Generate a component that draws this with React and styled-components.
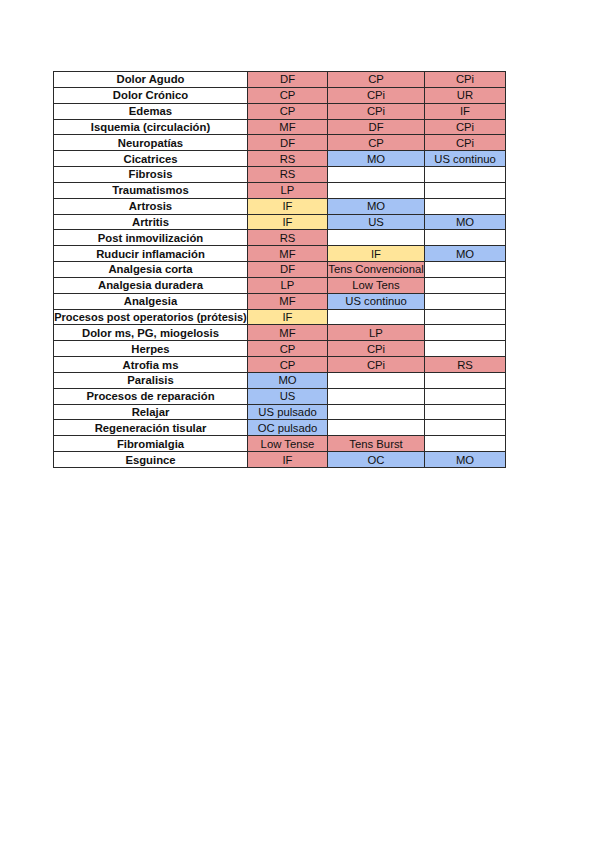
import React from "react";
import styled, { createGlobalStyle } from "styled-components";

const GlobalStyle = createGlobalStyle`
  html, body {
    margin: 0;
    background: #ffffff;
  }
  body {
    font-family: "Liberation Sans", Arial, sans-serif;
    color: #111;
  }
`;

const COLORS = {
  r: "#ea9999",
  b: "#a4c2f4",
  y: "#ffe599",
  w: "#ffffff",
};

const rows = [
  ["Dolor Agudo", ["DF", "r"], ["CP", "r"], ["CPi", "r"]],
  ["Dolor Crónico", ["CP", "r"], ["CPi", "r"], ["UR", "r"]],
  ["Edemas", ["CP", "r"], ["CPi", "r"], ["IF", "r"]],
  ["Isquemia (circulación)", ["MF", "r"], ["DF", "r"], ["CPi", "r"]],
  ["Neuropatías", ["DF", "r"], ["CP", "r"], ["CPi", "r"]],
  ["Cicatrices", ["RS", "r"], ["MO", "b"], ["US continuo", "b"]],
  ["Fibrosis", ["RS", "r"], null, null],
  ["Traumatismos", ["LP", "r"], null, null],
  ["Artrosis", ["IF", "y"], ["MO", "b"], null],
  ["Artritis", ["IF", "y"], ["US", "b"], ["MO", "b"]],
  ["Post inmovilización", ["RS", "r"], null, null],
  ["Ruducir inflamación", ["MF", "r"], ["IF", "y"], ["MO", "b"]],
  ["Analgesia corta", ["DF", "r"], ["Tens Convencional", "r"], null],
  ["Analgesia duradera", ["LP", "r"], ["Low Tens", "r"], null],
  ["Analgesia", ["MF", "r"], ["US continuo", "b"], null],
  ["Procesos post operatorios (prótesis)", ["IF", "y"], null, null],
  ["Dolor ms, PG, miogelosis", ["MF", "r"], ["LP", "r"], null],
  ["Herpes", ["CP", "r"], ["CPi", "r"], null],
  ["Atrofia ms", ["CP", "r"], ["CPi", "r"], ["RS", "r"]],
  ["Paralisis", ["MO", "b"], null, null],
  ["Procesos de reparación", ["US", "b"], null, null],
  ["Relajar", ["US pulsado", "b"], null, null],
  ["Regeneración tisular", ["OC pulsado", "b"], null, null],
  ["Fibromialgia", ["Low Tense", "r"], ["Tens Burst", "r"], null],
  ["Esguince", ["IF", "r"], ["OC", "b"], ["MO", "b"]],
];

const Page = styled.div`
  padding: 71px 0 0 53px;
`;

const Grid = styled.div`
  display: grid;
  grid-template-columns: 193px 79px 96px 80px;
  grid-template-rows: repeat(25, 1fr);
  gap: 1px;
  width: 453px;
  height: 397px;
  border: 1px solid #2a2a2a;
  box-sizing: border-box;
  background: #2a2a2a;
`;

const Label = styled.div`
  background: #fff;
  display: flex;
  align-items: center;
  justify-content: center;
  font-size: ${(p) => (p.$long ? "11px" : "11.3px")};
  font-weight: bold;
  white-space: nowrap;
`;

const Cell = styled.div`
  background: ${(p) => COLORS[p.$tone] || "#fff"};
  display: flex;
  align-items: center;
  justify-content: center;
  font-size: 11.3px;
  white-space: nowrap;
`;

export default function App() {
  return (
    <>
      <GlobalStyle />
      <Page>
        <Grid>
          {rows.map(([label, ...vals], i) => (
            <React.Fragment key={i}>
              <Label $long={label.length > 30}>{label}</Label>
              {vals.map((v, j) => (
                <Cell key={j} $tone={v ? v[1] : "w"}>
                  {v ? v[0] : ""}
                </Cell>
              ))}
            </React.Fragment>
          ))}
        </Grid>
      </Page>
    </>
  );
}
